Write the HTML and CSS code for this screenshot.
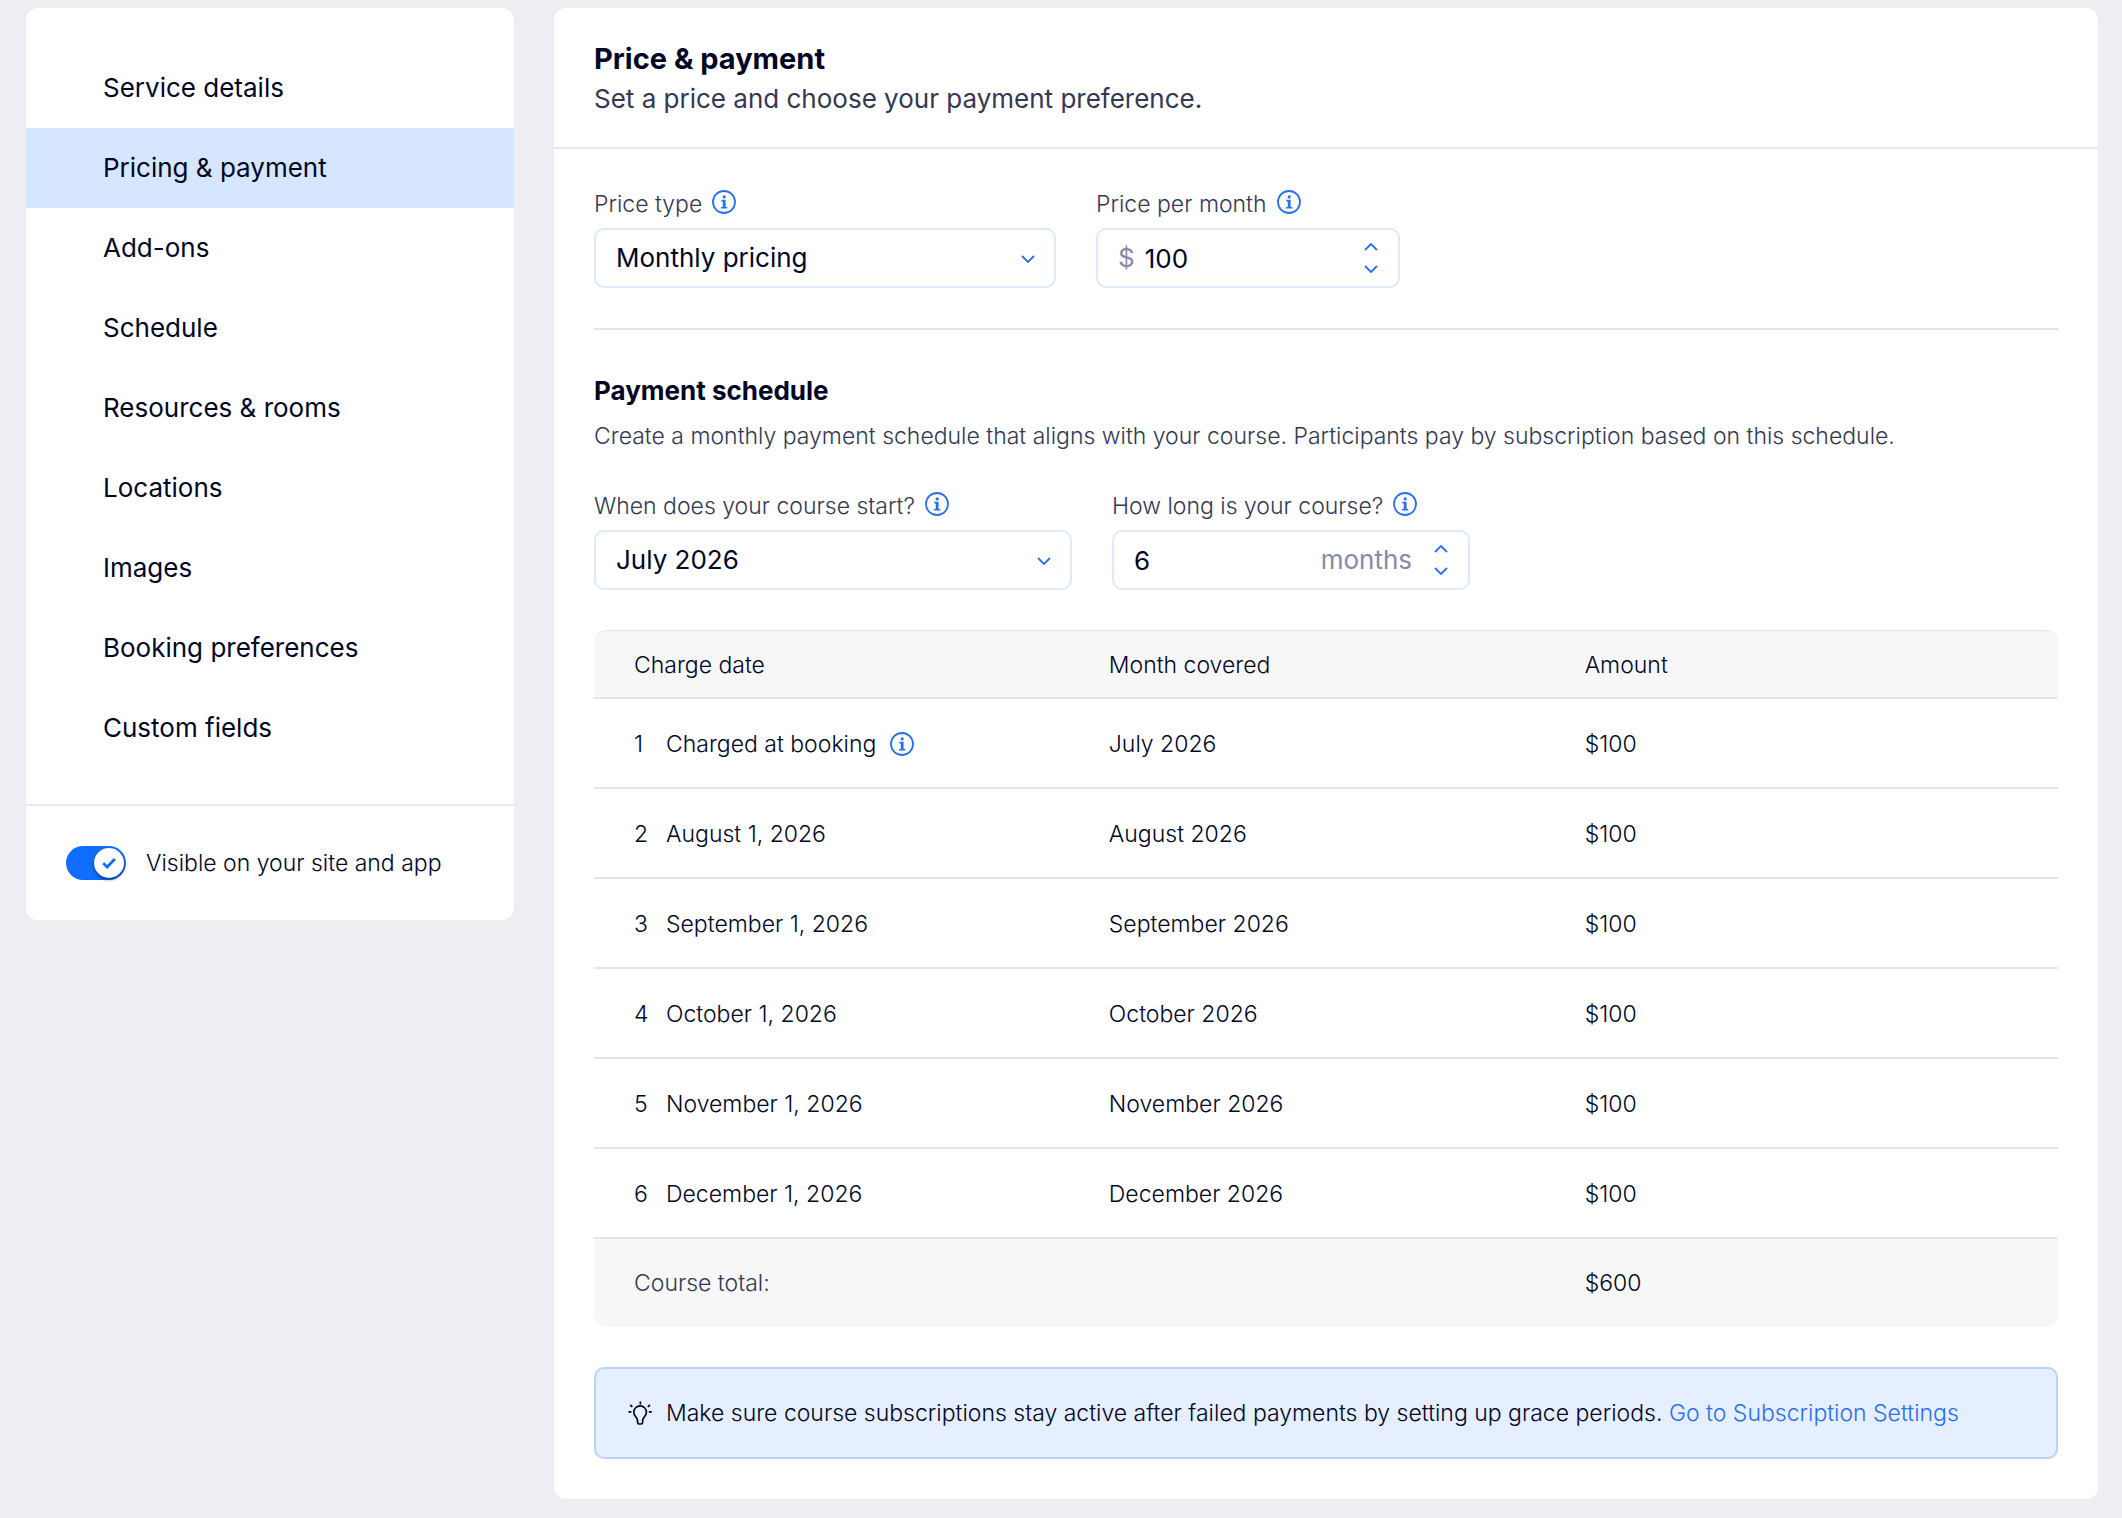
FILE: index.html
```html
<!DOCTYPE html>
<html lang="en">

<head>
    <meta charset="UTF-8">
    <meta name="viewport" content="width=device-width, initial-scale=1.0">
    <title>Price &amp; payment</title>
    <link rel="stylesheet" href="styles.css">
</head>

<body>
    <!-- shared icons -->
    <svg class="sprite" aria-hidden="true">
        <symbol id="icon-info" viewBox="0 0 24 24">
            <circle cx="12" cy="12" r="11" fill="none" stroke="currentColor" stroke-width="1.8" />
            <circle cx="12.2" cy="6.9" r="1.6" fill="currentColor" />
            <path d="M9.3 9.8h4.3v7.1h1.7v1.5H9v-1.5h1.8v-5.5H9.3z" fill="currentColor" />
        </symbol>
        <symbol id="icon-down" viewBox="0 0 14 8">
            <path d="M1 1l6 6 6-6" fill="none" stroke="currentColor" stroke-width="1.8" />
        </symbol>
        <symbol id="icon-up" viewBox="0 0 14 8">
            <path d="M1 7l6-6 6 6" fill="none" stroke="currentColor" stroke-width="1.8" />
        </symbol>
        <symbol id="icon-bulb" viewBox="0 0 24 24">
            <path d="M9.6 20c0-4-3.8-4.6-3.8-8.8a6.3 6.3 0 0 1 12.6 0c0 4.2-3.8 4.8-3.8 8.8v1.4a1.6 1.6 0 0 1-1.6 1.6h-1.8a1.6 1.6 0 0 1-1.6-1.6z" fill="none" stroke="currentColor" stroke-width="1.7" />
            <path d="M12.4.4v3M.4 10.8h3M20.8 10.8h3M2.2 4l2.2 1.8M22 4l-2.2 1.8" fill="none" stroke="currentColor" stroke-width="1.7" />
        </symbol>
    </svg>

    <div class="page">
        <aside class="card sidebar">
            <nav class="menu">
                <a href="#">Service details</a>
                <a href="#" class="active">Pricing &amp; payment</a>
                <a href="#">Add-ons</a>
                <a href="#">Schedule</a>
                <a href="#">Resources &amp; rooms</a>
                <a href="#">Locations</a>
                <a href="#">Images</a>
                <a href="#">Booking preferences</a>
                <a href="#">Custom fields</a>
            </nav>
            <div class="visibility">
                <span class="toggle">
                    <input type="checkbox" id="visible" checked>
                    <span class="knob">
                        <svg viewBox="0 0 14 12"><path d="M1.2 6.2l4 3.8 7.6-8" fill="none" stroke="currentColor" stroke-width="2.8" /></svg>
                    </span>
                </span>
                <label for="visible">Visible on your site and app</label>
            </div>
        </aside>

        <main class="card">
            <header class="card-header">
                <h1>Price &amp; payment</h1>
                <p>Set a price and choose your payment preference.</p>
            </header>

            <div class="card-body">
                <div class="fields">
                    <div class="field price-type">
                        <div class="field-label">
                            <label for="price-type">Price type</label>
                            <button class="info" type="button" aria-label="Info"><svg><use href="#icon-info" /></svg></button>
                        </div>
                        <div class="control">
                            <select id="price-type">
                                <option>Monthly pricing</option>
                            </select>
                            <svg class="arrow"><use href="#icon-down" /></svg>
                        </div>
                    </div>
                    <div class="field price">
                        <div class="field-label">
                            <label for="price">Price per month</label>
                            <button class="info" type="button" aria-label="Info"><svg><use href="#icon-info" /></svg></button>
                        </div>
                        <div class="control">
                            <span class="affix prefix">$</span>
                            <input type="text" inputmode="numeric" id="price" value="100">
                            <div class="stepper">
                                <button type="button" aria-label="Increase"><svg><use href="#icon-up" /></svg></button>
                                <button type="button" aria-label="Decrease"><svg><use href="#icon-down" /></svg></button>
                            </div>
                        </div>
                    </div>
                </div>

                <hr>

                <h2>Payment schedule</h2>
                <p class="description">Create a monthly payment schedule that aligns with your course. Participants pay by subscription based on this schedule.</p>

                <div class="fields">
                    <div class="field start">
                        <div class="field-label">
                            <label for="start">When does your course start?</label>
                            <button class="info" type="button" aria-label="Info"><svg><use href="#icon-info" /></svg></button>
                        </div>
                        <div class="control">
                            <select id="start">
                                <option>July 2026</option>
                            </select>
                            <svg class="arrow"><use href="#icon-down" /></svg>
                        </div>
                    </div>
                    <div class="field length">
                        <div class="field-label">
                            <label for="length">How long is your course?</label>
                            <button class="info" type="button" aria-label="Info"><svg><use href="#icon-info" /></svg></button>
                        </div>
                        <div class="control">
                            <input type="text" inputmode="numeric" id="length" value="6">
                            <span class="affix suffix">months</span>
                            <div class="stepper">
                                <button type="button" aria-label="Increase"><svg><use href="#icon-up" /></svg></button>
                                <button type="button" aria-label="Decrease"><svg><use href="#icon-down" /></svg></button>
                            </div>
                        </div>
                    </div>
                </div>

                <table>
                    <thead>
                        <tr>
                            <th class="col-date">Charge date</th>
                            <th class="col-month">Month covered</th>
                            <th>Amount</th>
                        </tr>
                    </thead>
                    <tbody>
                        <tr>
                            <td><div class="charge"><span class="num">1</span>Charged at booking<button class="info" type="button" aria-label="Info"><svg><use href="#icon-info" /></svg></button></div></td>
                            <td>July 2026</td>
                            <td>$100</td>
                        </tr>
                        <tr>
                            <td><div class="charge"><span class="num">2</span>August 1, 2026</div></td>
                            <td>August 2026</td>
                            <td>$100</td>
                        </tr>
                        <tr>
                            <td><div class="charge"><span class="num">3</span>September 1, 2026</div></td>
                            <td>September 2026</td>
                            <td>$100</td>
                        </tr>
                        <tr>
                            <td><div class="charge"><span class="num">4</span>October 1, 2026</div></td>
                            <td>October 2026</td>
                            <td>$100</td>
                        </tr>
                        <tr>
                            <td><div class="charge"><span class="num">5</span>November 1, 2026</div></td>
                            <td>November 2026</td>
                            <td>$100</td>
                        </tr>
                        <tr>
                            <td><div class="charge"><span class="num">6</span>December 1, 2026</div></td>
                            <td>December 2026</td>
                            <td>$100</td>
                        </tr>
                    </tbody>
                    <tfoot>
                        <tr>
                            <td colspan="2">Course total:</td>
                            <td class="total">$600</td>
                        </tr>
                    </tfoot>
                </table>

                <div class="notice">
                    <svg><use href="#icon-bulb" /></svg>
                    <p>Make sure course subscriptions stay active after failed payments by setting up grace periods. <a href="#">Go to Subscription Settings</a></p>
                </div>
            </div>
        </main>
    </div>
</body>

</html>
```
FILE: styles.css
```css
* {
    box-sizing: border-box;
}

body {
    margin: 0;
    background: #eceef2;
    color: #000624;
    font-family: Inter, "Liberation Sans", sans-serif;
    font-size: 23px;
    font-weight: 300;
    line-height: 32px;
}

h1, h2, p {
    margin: 0;
}

a {
    color: #2a6fec;
    text-decoration: none;
}

button, input, select {
    font: inherit;
    color: inherit;
    border: 0;
    padding: 0;
    margin: 0;
    background: none;
    appearance: none;
    outline: none;
}

svg {
    display: block;
}

.sprite {
    position: absolute;
    width: 0;
    height: 0;
}

.page {
    display: flex;
    align-items: flex-start;
    gap: 40px;
    padding: 8px 24px 19px 26px;
}

.card {
    background: #fff;
    border-radius: 12px;
}

/* sidebar */
.sidebar {
    flex: 0 0 488px;
    padding-top: 40px;
}

.menu {
    padding-bottom: 36px;
    border-bottom: 2px solid #e6e9ef;
}

.menu a {
    display: block;
    padding: 0 77px;
    color: inherit;
    font-size: 26px;
    font-weight: 400;
    line-height: 80px;
}

.menu a.active {
    background: #d6e6fe;
}

.visibility {
    display: flex;
    align-items: center;
    gap: 20px;
    padding: 40px;
}

.toggle {
    position: relative;
    width: 60px;
    height: 34px;
}

.toggle input {
    display: block;
    width: 60px;
    height: 34px;
    border-radius: 17px;
    background: #116dff;
}

.knob {
    position: absolute;
    top: 2px;
    right: 2px;
    display: flex;
    align-items: center;
    justify-content: center;
    width: 30px;
    height: 30px;
    border-radius: 50%;
    background: #fff;
    color: #116dff;
    box-shadow: 0 2px 3px rgba(0, 6, 36, 0.5);
    pointer-events: none;
}

.knob svg {
    width: 14px;
    height: 12px;
}

/* main card */
main {
    flex: 1;
    min-width: 0;
}

.card-header {
    padding: 31px 40px 28px;
    border-bottom: 2px solid #e8eaef;
}

h1 {
    font-size: 29px;
    line-height: 40px;
}

.card-header p {
    color: #333853;
    font-size: 26px;
    font-weight: 400;
    line-height: 40px;
}

.card-body {
    padding: 39px 40px 40px;
}

h2 {
    font-size: 26px;
    line-height: 42px;
}

hr {
    height: 2px;
    margin: 40px 0;
    border: 0;
    background: #dfe3eb;
}

.description {
    margin: 8px 0 38px;
    color: #333853;
}

.fields {
    display: flex;
    gap: 40px;
}

.price-type {
    width: 462px;
}

.price {
    width: 304px;
}

.start {
    width: 478px;
}

.length {
    width: 358px;
}

.field-label {
    display: flex;
    align-items: center;
    gap: 10px;
    height: 32px;
    margin-bottom: 8px;
    color: #333853;
}

.info, .info svg {
    width: 24px;
    height: 24px;
    color: #2a6fec;
}

.field-label .info {
    margin-bottom: 4px;
}

.control {
    position: relative;
    display: flex;
    align-items: center;
    height: 60px;
    padding: 0 20px;
    border: 2px solid #dfe9fb;
    border-radius: 10px;
    font-size: 26px;
    font-weight: 400;
}

.control select, .control input {
    flex: 1;
    width: 100%;
    min-width: 0;
    height: 56px;
}

.arrow {
    position: absolute;
    top: 25px;
    right: 19px;
    width: 14px;
    height: 8px;
    color: #2a6fec;
    pointer-events: none;
}

.affix {
    color: #868aa5;
}

.prefix {
    margin-right: 10px;
}

.suffix {
    margin-right: 22px;
}

.stepper {
    display: flex;
    flex-direction: column;
    gap: 14px;
    color: #2a6fec;
}

.stepper button, .stepper svg {
    width: 14px;
    height: 8px;
}

/* payment table */
table {
    width: 100%;
    margin-top: 40px;
    border-collapse: separate;
    border-spacing: 0;
    table-layout: fixed;
}

.col-date {
    width: 33.8%;
}

.col-month {
    width: 32.5%;
}

th, td {
    padding: 2px 20px 0;
    text-align: left;
    font-weight: inherit;
    border-bottom: 2px solid #e2e5eb;
}

th:first-child, td:first-child {
    padding-left: 40px;
}

th {
    height: 69px;
    background: #f7f7f8;
    border-top: 1px solid #e2e5eb;
}

th:first-child {
    border-top-left-radius: 12px;
}

th:last-child {
    border-top-right-radius: 12px;
}

td {
    height: 90px;
}

tfoot td {
    height: 88px;
    padding-top: 0;
    background: #f7f7f8;
    border-bottom: 0;
    color: #333853;
}

tfoot td:first-child {
    border-bottom-left-radius: 12px;
}

tfoot td:last-child {
    border-bottom-right-radius: 12px;
}

tfoot .total {
    color: #000624;
}

.charge {
    display: flex;
    align-items: center;
}

.num {
    width: 32px;
}

.charge .info {
    margin-left: 14px;
}

.notice {
    display: flex;
    align-items: center;
    gap: 14px;
    margin-top: 40px;
    padding: 28px 32px;
    border: 2px solid #bdd3f5;
    border-radius: 10px;
    background: #e5efff;
}

.notice svg {
    flex: none;
    width: 24px;
    height: 24px;
}
```
